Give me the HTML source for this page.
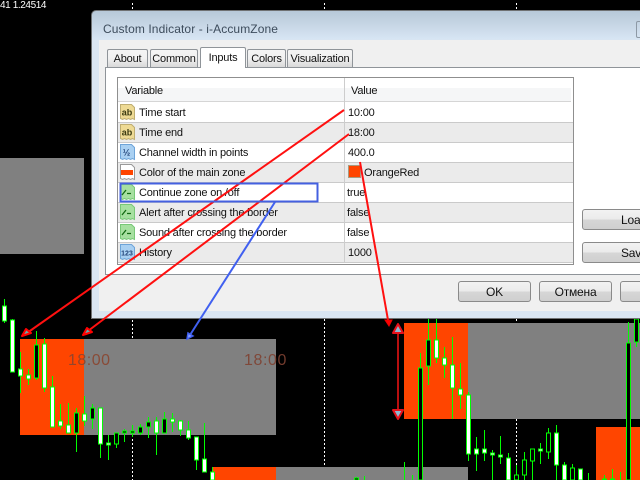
<!DOCTYPE html>
<html><head><meta charset="utf-8"><style>
html,body{margin:0;padding:0;background:#000;width:640px;height:480px;overflow:hidden}
#r{position:relative;width:640px;height:480px;overflow:hidden;font-family:"Liberation Sans",sans-serif;font-size:11px;letter-spacing:-.2px;color:#111}
#r>*{position:absolute}
.t{position:absolute;white-space:nowrap}
.a{position:absolute;box-sizing:border-box;border:1px solid #8f9499;border-bottom:0;background:linear-gradient(#f4f4f4,#f1f1f1 50%,#d8d8d8);text-align:center;top:49px;height:18px;line-height:19px;font-size:11px;border-radius:2px 2px 0 0}
.b{position:absolute;box-sizing:border-box;border:1px solid #8a8a8a;border-radius:3px;background:linear-gradient(#f2f2f2,#ebebeb 48%,#d6d6d6 52%,#cfcfcf);text-align:center;font-size:12px;height:21px;line-height:21px}
.l{position:absolute;left:118px;width:455px;height:1px;background:#cacaca}
.g{position:absolute;left:118px;width:455px;height:19px;background:#ebebeb}
.n{position:absolute;left:139px;white-space:nowrap;line-height:14px}
.v{position:absolute;left:348px;white-space:nowrap;line-height:14px}
svg text{font-family:"Liberation Sans",sans-serif;letter-spacing:0}
</style></head><body><div id="r">
<svg width="640" height="480" style="left:0;top:0" shape-rendering="crispEdges">
<rect x="0" y="158" width="84" height="96" fill="#808080"/>
<rect x="20" y="339" width="64" height="96" fill="#ff4500"/>
<rect x="84" y="339" width="192" height="96" fill="#808080"/>
<rect x="213" y="467" width="63" height="13" fill="#ff4500"/>
<rect x="276" y="467" width="192" height="13" fill="#808080"/>
<rect x="404" y="323" width="64" height="96" fill="#ff4500"/>
<rect x="468" y="323" width="172" height="96" fill="#808080"/>
<rect x="596" y="427" width="44" height="53" fill="#ff4500"/>
<path d="M132.5 3v7M324.5 3v7M516.5 3v7M132.5 320v19M132.5 435v45M324.5 319v148M516.5 319v4M516.5 419v61" stroke="#fff" stroke-dasharray="2 2" fill="none"/>
<path stroke="#0f0" fill="none" d="M4.5 299V323M12.5 319V372M20.5 352V393M28.5 369V385M36.5 331V380M44.5 338V392M52.5 376V427M60.5 404V429M68.5 403V433M76.5 408V452M84.5 396V426M92.5 404V429M100.5 408V458M108.5 435V460M116.5 433V448M124.5 429V442M132.5 425V437M140.5 424V435M148.5 417V438M156.5 417V455M164.5 412V433M172.5 413V432M180.5 420V436M188.5 421V440M196.5 437V470M204.5 423V472M212.5 467V480M356.5 477V480M364.5 476V480M404.5 462V480M412.5 475V480M420.5 353V480M428.5 319V385M436.5 319V363M444.5 347V378M452.5 337V419M460.5 363V409M468.5 392V461M476.5 437V471M484.5 430V461M492.5 450V480M500.5 436V464M508.5 453V480M516.5 465V480M524.5 452V480M532.5 449V480M540.5 443V464M548.5 428V459M556.5 425V480M564.5 462V480M572.5 464V480M580.5 469V480M588.5 473V480M604.5 475V480M612.5 469V480M620.5 472V480M628.5 322V480M636.5 319V347"/>
<path stroke="#0f0" fill="#000" d="M34.500 345h4v33h-4zM74.500 413h4v20h-4zM90.500 408h4v11h-4zM114.500 433h4v11h-4zM122.500 431h4v2h-4zM130.500 431h4v2h-4zM138.500 427h4v6h-4zM146.500 422h4v5h-4zM162.500 419h4v14h-4zM354.500 478h4v2h-4zM418.500 368h4v112h-4zM426.500 340h4v26h-4zM514.500 475h4v5h-4zM522.500 460h4v15h-4zM530.500 449h4v12h-4zM546.500 433h4v19h-4zM570.500 468h4v12h-4zM626.500 343h4v137h-4zM634.500 319h4v23h-4zM602.500 479h4v1h-4zM610.500 479h4v1h-4z"/>
<path stroke="#0f0" fill="#fff" d="M2.500 306h4v15h-4zM10.500 320h4v52h-4zM18.500 369h4v7h-4zM26.500 375h4v4h-4zM42.500 344h4v44h-4zM50.500 387h4v40h-4zM58.500 421h4v5h-4zM66.500 425h4v8h-4zM82.500 414h4v7h-4zM98.500 408h4v36h-4zM106.500 443h4v2h-4zM154.500 421h4v12h-4zM170.500 419h4v3h-4zM178.500 421h4v9h-4zM186.500 430h4v8h-4zM194.500 437h4v23h-4zM202.500 459h4v13h-4zM210.500 472h4v8h-4zM434.500 340h4v18h-4zM442.500 358h4v7h-4zM450.500 365h4v23h-4zM458.500 389h4v6h-4zM466.500 395h4v59h-4zM474.500 449h4v5h-4zM482.500 449h4v4h-4zM490.500 453h4v2h-4zM498.500 455h4v2h-4zM506.500 458h4v22h-4zM538.500 449h4v2h-4zM554.500 433h4v32h-4zM562.500 465h4v15h-4zM578.500 469h4v11h-4z"/>
</svg>
<div class="t" style="left:0;top:0;color:#fff;font-size:10px;letter-spacing:-.4px;line-height:12px">41 1.24514</div>
<div class="t" style="left:68px;top:352px;color:#8a4630;font-size:16px;line-height:18px;letter-spacing:.5px;opacity:.9">18:00</div>
<div class="t" style="left:244px;top:352px;color:#7f4232;font-size:16px;line-height:18px;letter-spacing:.6px;opacity:.9">18:00</div>

<div style="left:91px;top:10px;width:560px;height:309px;box-sizing:border-box;border:1px solid #6f7173;border-radius:5px 0 0 0;background:linear-gradient(#b7c8d8 0,#d7e5f3 28px,#d9e5f2 29px)"></div>
<div class="t" style="left:103px;top:21px;font-size:12px;line-height:16px;color:#3d4c5c;letter-spacing:.1px">Custom Indicator - i-AccumZone</div>
<div style="left:636px;top:21px;width:10px;height:15px;border:1px solid #8d99a5;border-radius:2px"></div>
<div style="left:99px;top:40px;width:541px;height:271px;background:#f0f0f0"></div>
<div style="left:105px;top:67px;width:540px;height:208px;box-sizing:border-box;border:1px solid #8f9499;background:#fff"></div>
<div class="a" style="left:107px;width:41px">About</div>
<div class="a" style="left:150px;width:48px">Common</div>
<div class="a" style="left:200px;width:46px;top:47px;height:21px;background:#fff;line-height:20px;z-index:2">Inputs</div>
<div class="a" style="left:247px;width:39px">Colors</div>
<div class="a" style="left:287px;width:66px">Visualization</div>

<div style="left:117px;top:77px;width:457px;height:188px;box-sizing:border-box;border:1px solid #8f8f8f;background:#fff"></div>
<div style="left:118px;top:88px;width:453px;height:13px;background:#f5f6f7"></div>
<div class="g" style="top:123px"></div><div class="g" style="top:163px"></div><div class="g" style="top:203px"></div><div class="g" style="top:243px"></div>
<div class="l" style="top:101px;width:453px;background:#d5d5d5"></div>
<div class="l" style="top:122px"></div><div class="l" style="top:142px"></div><div class="l" style="top:162px"></div><div class="l" style="top:182px"></div><div class="l" style="top:202px"></div><div class="l" style="top:222px"></div><div class="l" style="top:242px"></div><div class="l" style="top:262px"></div>
<div style="left:344px;top:78px;width:1px;height:184px;background:#cdcdcd"></div>
<div class="t" style="left:125px;top:84px;line-height:14px">Variable</div>
<div class="t" style="left:351px;top:84px;line-height:14px">Value</div>

<svg width="20" height="170" viewBox="0 0 20 170" style="left:119px;top:103px">
<g font-size="9" font-weight="bold" text-anchor="middle">
<path d="M1.500 1.500h11l3 3v12l-2-1-2 1-2-1-2 1-2-1-2 1-2-1z" fill="#eeda94" stroke="#bfae72"/><text x="8" y="12.500" fill="#3a3a10">ab</text>
<path d="M1.500 21.500h11l3 3v12l-2-1-2 1-2-1-2 1-2-1-2 1-2-1z" fill="#eeda94" stroke="#bfae72"/><text x="8" y="32.500" fill="#3a3a10">ab</text>
<path d="M1.500 41.500h11l3 3v12l-2-1-2 1-2-1-2 1-2-1-2 1-2-1z" fill="#a9d0f2" stroke="#6ea4d8"/><text x="7.500" y="52.500" fill="#24457a" font-size="9">½</text>
<path d="M1.500 61.500h11l3 3v12l-2-1-2 1-2-1-2 1-2-1-2 1-2-1z" fill="#fff" stroke="#9a9a9a"/><rect x="2" y="67" width="12" height="5" fill="#ff4500"/>
<g fill="#a6e0a0" stroke="#78c878">
<path d="M1.500 81.500h11l3 3v12l-2-1-2 1-2-1-2 1-2-1-2 1-2-1z"/>
<path d="M1.500 101.500h11l3 3v12l-2-1-2 1-2-1-2 1-2-1-2 1-2-1z"/>
<path d="M1.500 121.500h11l3 3v12l-2-1-2 1-2-1-2 1-2-1-2 1-2-1z"/>
</g>
<path d="M3 92l4-5M8 90.500h4M3 112l4-5M8 110.500h4M3 132l4-5M8 130.500h4" stroke="#146a14" stroke-width="1.300" fill="none"/>
<path d="M1.500 141.500h11l3 3v12l-2-1-2 1-2-1-2 1-2-1-2 1-2-1z" fill="#a9d0f2" stroke="#6ea4d8"/><text x="8" y="152.500" fill="#24457a" font-size="7">123</text>
</g></svg>

<div class="n" style="top:106px">Time start</div>
<div class="n" style="top:126px">Time end</div>
<div class="n" style="top:146px">Channel width in points</div>
<div class="n" style="top:166px">Color of the main zone</div>
<div class="n" style="top:186px">Continue zone on /off</div>
<div class="n" style="top:206px">Alert after crossing the border</div>
<div class="n" style="top:226px">Sound after crossing the border</div>
<div class="n" style="top:246px">History</div>
<div class="v" style="top:106px">10:00</div>
<div class="v" style="top:126px">18:00</div>
<div class="v" style="top:146px">400.0</div>
<div style="left:348px;top:165px;width:13px;height:13px;box-sizing:border-box;border:1px solid #a89a80;background:#ff4500"></div>
<div class="v" style="top:166px;left:364px">OrangeRed</div>
<div class="v" style="top:186px;left:347px">true</div>
<div class="v" style="top:206px;left:347px">false</div>
<div class="v" style="top:226px;left:347px">false</div>
<div class="v" style="top:246px">1000</div>

<div class="b" style="left:582px;top:209px;width:80px;text-align:left;text-indent:38px">Load</div>
<div class="b" style="left:582px;top:242px;width:80px;text-align:left;text-indent:38px">Save</div>
<div class="b" style="left:458px;top:281px;width:73px">OK</div>
<div class="b" style="left:539px;top:281px;width:73px">Отмена</div>
<div class="b" style="left:620px;top:281px;width:73px"></div>

<svg width="640" height="480" style="left:0;top:0">
<g stroke="#ff1010" stroke-width="2" fill="none">
<path d="M344 110L27 333M349 134L88 331M360 162L388 320"/>
</g>
<path d="M275 202L190 335" stroke="#4060f0" stroke-width="2" fill="none"/>
<rect x="120.500" y="183.500" width="197" height="18" fill="none" stroke="#4460e0" stroke-width="2"/>
<path d="M22 336l4-7 5 4zM83 335l4-7 5 4z" fill="#6aa" stroke="#f00" stroke-width="2" stroke-linejoin="round"/>
<path d="M187 339l1-6 5 3z" fill="#8aa0ff" stroke="#4060f0" stroke-width="1.500"/>
<path d="M385 320h7l-3 6z" fill="#f00" stroke="#e00"/>
<path d="M398 330V412" stroke="#b80f0f" stroke-width="2"/>
<path d="M398 324l5 9h-10zM398 419l5-9h-10z" fill="#8fb8d0" stroke="#e8101a" stroke-width="2" stroke-linejoin="round"/>
</svg>
</div></body></html>
